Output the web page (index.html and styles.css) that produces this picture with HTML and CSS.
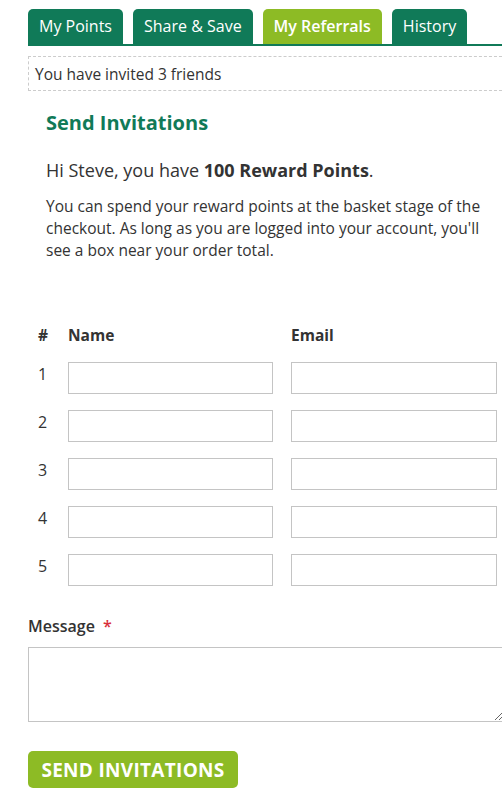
FILE: index.html
```html
<!DOCTYPE html>
<html>
<head>
    <title>My Referrals</title>
    <link rel="stylesheet" href="styles.css">
</head>
<body>
    <div class="page">
        <div class="tabs">
            <a class="tab" href="#">My Points</a>
            <a class="tab" href="#">Share &amp; Save</a>
            <a class="tab active" href="#">My Referrals</a>
            <a class="tab" href="#">History</a>
        </div>

        <div class="invited">You have invited 3 friends</div>

        <div class="intro">
            <h2>Send Invitations</h2>
            <p class="greeting">Hi Steve, you have <strong>100 Reward Points</strong>.</p>
            <p class="info">You can spend your reward points at the basket stage of the checkout. As long as you are logged into your account, you'll see a box near your order total.</p>
        </div>

        <form class="invite-form">
            <div class="invite-grid">
                <div class="col-head">#</div>
                <div class="col-head">Name</div>
                <div class="col-head">Email</div>

                <div class="num">1</div>
                <input type="text">
                <input type="email">

                <div class="num">2</div>
                <input type="text">
                <input type="email">

                <div class="num">3</div>
                <input type="text">
                <input type="email">

                <div class="num">4</div>
                <input type="text">
                <input type="email">

                <div class="num">5</div>
                <input type="text">
                <input type="email">
            </div>

            <label class="message-label">Message <span class="required">*</span></label>
            <textarea class="message-box"></textarea>

            <button type="button" class="send-btn">SEND INVITATIONS</button>
        </form>
    </div>
</body>
</html>
```

FILE: styles.css
```css
* {
    margin: 0;
    padding: 0;
    box-sizing: border-box;
    font-family: "Open Sans", Arial, sans-serif;
}

body {
    background-color: #ffffff;
    color: #333333;
    overflow: hidden;
}

.page {
    padding: 9px 0 0 28px;
    width: 512px;
}

.tabs {
    display: flex;
    gap: 10px;
    border-bottom: 2px solid #107a58;
}

.tab {
    display: block;
    height: 35px;
    line-height: 35px;
    padding: 0 11px;
    background-color: #107a58;
    color: #ffffff;
    font-size: 16px;
    text-decoration: none;
    border-radius: 5px 5px 0 0;
}

.tab.active {
    background-color: #8dbb25;
    font-weight: 600;
}

.invited {
    margin-top: 10px;
    height: 35px;
    padding: 6px 6px;
    border: 1px dashed #cccccc;
    font-size: 15.5px;
}

.intro {
    padding: 0 18px;
}

.intro h2 {
    margin-top: 18px;
    font-size: 20px;
    font-weight: 700;
    color: #107a58;
}

.greeting {
    margin-top: 22px;
    font-size: 18px;
}

.info {
    margin-top: 13px;
    font-size: 15.5px;
    line-height: 22px;
    width: 445px;
}

.invite-form {
    margin-top: 61px;
}

.invite-grid {
    display: grid;
    grid-template-columns: 12px 205px 206px;
    column-gap: 18px;
    row-gap: 16px;
    padding-left: 10px;
    align-items: start;
}

.col-head {
    font-size: 15.5px;
    font-weight: 700;
    line-height: 20px;
    padding-top: 3px;
    margin-bottom: 1px;
}

.num {
    font-size: 16px;
    line-height: 24px;
}

.invite-grid input {
    height: 32px;
    border: 1px solid #c4c4c4;
    font-size: 15px;
    padding: 4px 8px;
}

.message-label {
    display: block;
    margin-top: 29px;
    font-size: 16px;
    font-weight: 600;
}

.required {
    color: #d9303a;
    margin-left: 4px;
}

.message-box {
    display: block;
    margin-top: 10px;
    width: 476px;
    height: 75px;
    border: 1px solid #c4c4c4;
    font-size: 15px;
    resize: vertical;
}

.send-btn {
    display: block;
    margin-top: 29px;
    width: 210px;
    height: 37px;
    background-color: #8dbb25;
    color: #ffffff;
    font-size: 19px;
    font-weight: 700;
    letter-spacing: 0.3px;
    border: none;
    border-radius: 5px;
}
```
